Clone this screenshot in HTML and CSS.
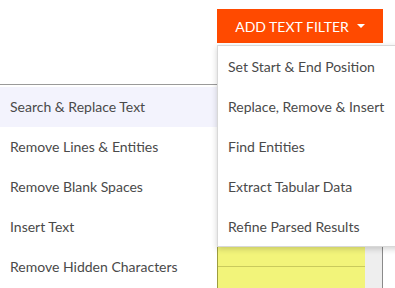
FILE: index.html
```html
<!DOCTYPE html>
<html>
<head>
<meta charset="utf-8">
<link rel="stylesheet" href="styles.css">
</head>
<body>
<div class="page">
  <div class="topbar">
    <button class="add-btn">ADD TEXT FILTER <span class="caret"></span></button>
  </div>
  <div class="workspace">
    <div class="ws-left"></div>
    <div class="ws-yellow"><div class="ws-row"></div></div>
    <div class="ws-gray"></div>
    <div class="ws-rule"></div>
    <div class="ws-white"></div>
  </div>

  <ul class="menu menu-left">
    <li class="active">Search &amp; Replace Text</li>
    <li>Remove Lines &amp; Entities</li>
    <li>Remove Blank Spaces</li>
    <li>Insert Text</li>
    <li>Remove Hidden Characters</li>
  </ul>

  <ul class="menu menu-right">
    <li>Set Start &amp; End Position</li>
    <li>Replace, Remove &amp; Insert</li>
    <li>Find Entities</li>
    <li>Extract Tabular Data</li>
    <li>Refine Parsed Results</li>
  </ul>
</div>
</body>
</html>
```

FILE: styles.css
```css
* { box-sizing: border-box; }
html, body { margin: 0; padding: 0; background: #fff; }
body { font-family: Lato, "Open Sans", sans-serif; }

.page {
  position: relative;
  width: 395px;
  height: 288px;
  overflow: hidden;
  background: #fff;
}

.topbar {
  display: flex;
  padding: 9px 0 0 217px;
}

.add-btn {
  width: 166px;
  height: 34px;
  border: 0;
  background: #ff4a00;
  color: #fff;
  font-family: Lato, "Open Sans", sans-serif;
  font-size: 14px;
  display: flex;
  align-items: center;
  justify-content: center;
  gap: 8px;
  padding: 0 0 0 0;
}

.caret {
  width: 0;
  height: 0;
  border-left: 4px solid transparent;
  border-right: 4px solid transparent;
  border-top: 4px solid #fff;
  margin-top: 0;
}

.workspace {
  display: grid;
  grid-template-columns: 217px 148px 17px 1px 1fr;
  margin-top: 76px;
  height: 169px;
}

.ws-yellow {
  background: #f2f47a;
  border-left: 1px solid #9d9d3e;
}
.ws-row {
  height: 148px;
  border-bottom: 1px solid #c9ca5d;
}
.ws-gray { background: #eeeeee; }
.ws-rule { background: #8a8a8a; }
.ws-white { background: #fff; }

.menu {
  list-style: none;
  margin: 0;
  position: absolute;
  background: #fff;
  font-size: 14px;
  color: #4a4a4a;
}
.menu li {
  height: 40px;
  display: flex;
  align-items: center;
  white-space: nowrap;
  padding-bottom: 1px;
}

.menu-left {
  left: 0;
  top: 84px;
  width: 217px;
  height: 220px;
  padding: 2px 0 0 0;
  border-top: 1px solid #9a9a9a;
}
.menu-left li { padding-left: 10px; }
.menu-left li.active { background: #f3f3fd; }

.menu-right {
  left: 217px;
  top: 45px;
  width: 190px;
  padding: 1px 0 0 0;
  height: 202px;
  border: 1px solid #d8d8d8;
  box-shadow: 0 2px 6px rgba(0,0,0,0.18);
}
.menu-right li { padding-left: 10px; }
```
